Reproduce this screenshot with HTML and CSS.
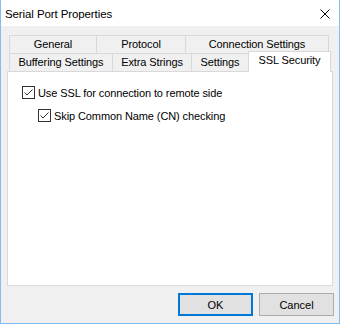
FILE: index.html
```html
<!DOCTYPE html>
<html lang="en">
<head>
    <meta charset="UTF-8">
    <title>Serial Port Properties</title>
    <link rel="stylesheet" href="styles.css">
</head>
<body>
    <div class="window">
        <div class="titlebar">
            <span class="title">Serial Port Properties</span>
            <svg class="close" width="10" height="10" viewBox="0 0 10 10">
                <path d="M0.5 0.5 L9.5 9.5 M9.5 0.5 L0.5 9.5" stroke="#000" stroke-width="1" fill="none"/>
            </svg>
        </div>

        <div class="content">
            <!-- Tabs, two rows -->
            <div class="tabs">
                <div class="tab-row">
                    <div class="tab tab-general">General</div>
                    <div class="tab tab-protocol">Protocol</div>
                    <div class="tab tab-connection last">Connection Settings</div>
                </div>
                <div class="tab-row">
                    <div class="tab tab-buffering">Buffering Settings</div>
                    <div class="tab tab-extra">Extra Strings</div>
                    <div class="tab tab-settings">Settings</div>
                    <div class="tab tab-ssl active">SSL Security</div>
                </div>
            </div>

            <div class="panel">
                <label class="check">
                    <span class="box">
                        <svg width="13" height="13" viewBox="0 0 13 13">
                            <rect x="0.5" y="0.5" width="12" height="12" fill="#fff" stroke="#333"/>
                            <path d="M2.5 6.5 L5 9 L10.5 3.5" stroke="#333" stroke-width="1" fill="none"/>
                        </svg>
                    </span>
                    Use SSL for connection to remote side
                </label>
                <label class="check sub">
                    <span class="box">
                        <svg width="13" height="13" viewBox="0 0 13 13">
                            <rect x="0.5" y="0.5" width="12" height="12" fill="#fff" stroke="#333"/>
                            <path d="M2.5 6.5 L5 9 L10.5 3.5" stroke="#333" stroke-width="1" fill="none"/>
                        </svg>
                    </span>
                    Skip Common Name (CN) checking
                </label>
            </div>

            <div class="footer">
                <button class="btn btn-default">OK</button>
                <button class="btn">Cancel</button>
            </div>
        </div>
    </div>
</body>
</html>
```

FILE: styles.css
```css
* {
    box-sizing: border-box;
}
body {
    margin: 0;
    font-family: "Liberation Sans", Arial, sans-serif;
    font-size: 11px;
    letter-spacing: -0.1px;
    color: #000;
    background: #fff;
}
.window {
    width: 340px;
    height: 324px;
    border: 1px solid #86bdee;
    border-top: none;
    display: flex;
    flex-direction: column;
    background: #f0f0f0;
}
.titlebar {
    height: 26px;
    background: #fff;
    display: flex;
    align-items: center;
    justify-content: space-between;
    padding: 0 9px 0 4px;
}
.title {
    font-size: 11.5px;
    padding-top: 1px;
}
.close {
    display: block;
    margin-top: 1px;
}
.content {
    flex: 1;
    padding: 9px 6px 0 6px;
    display: flex;
    flex-direction: column;
}
.tabs {
    padding-left: 2px;
}
.tab-row {
    display: flex;
    height: 18px;
}
.tab {
    height: 18px;
    border-top: 1px solid #d9d9d9;
    border-left: 1px solid #d9d9d9;
    background: #f0f0f0;
    text-align: center;
    line-height: 17px;
    white-space: nowrap;
}
.tab.last {
    border-right: 1px solid #d9d9d9;
}
.tab-general { width: 87px; }
.tab-protocol { width: 89px; }
.tab-connection { width: 144px; }
.tab-buffering { width: 103px; }
.tab-extra { width: 79px; }
.tab-settings { width: 57px; }
.tab-ssl { width: 83px; }
.tab.active {
    position: relative;
    z-index: 1;
    height: 21px;
    margin-top: -2px;
    background: #fff;
    border-right: 1px solid #d9d9d9;
    line-height: 17px;
}
.panel {
    height: 215px;
    background: #fff;
    border: 1px solid #d9d9d9;
    padding: 14px 0 0 14px;
    display: flex;
    flex-direction: column;
    gap: 10px;
}
.check {
    display: flex;
    align-items: center;
    gap: 3px;
    height: 13px;
}
.check.sub {
    padding-left: 16px;
}
.box svg {
    display: block;
}
.footer {
    display: flex;
    justify-content: flex-end;
    gap: 6px;
    padding: 7px 0 0 0;
    margin-right: -1px;
}
.btn {
    width: 75px;
    height: 23px;
    font-family: inherit;
    font-size: 11px;
    background: #e1e1e1;
    border: 1px solid #adadad;
    padding: 0;
    color: #000;
}
.btn-default {
    border: 2px solid #0078d7;
}
```
